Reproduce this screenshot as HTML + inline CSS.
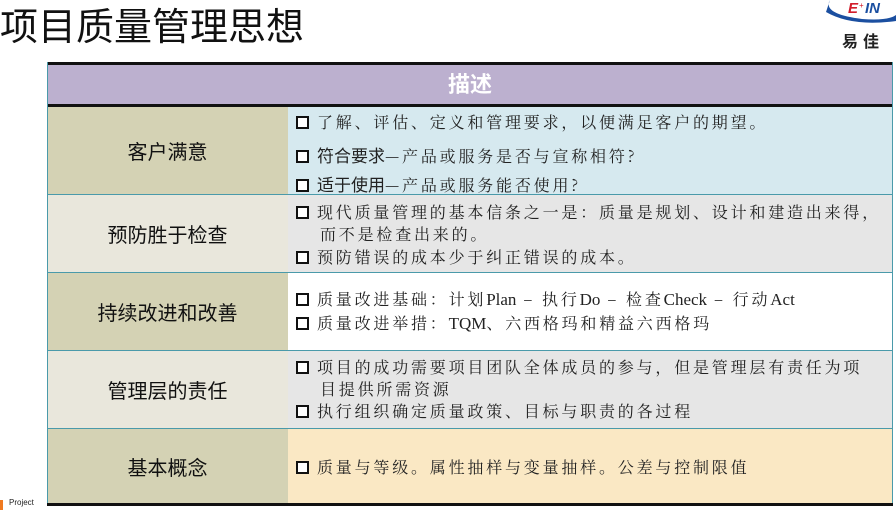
<!DOCTYPE html>
<html><head><meta charset="utf-8"><style>
*{margin:0;padding:0;box-sizing:border-box}
body{width:896px;height:510px;background:#fff;position:relative;overflow:hidden;font-family:"Liberation Sans","Noto Sans CJK SC",sans-serif}
.t{position:absolute;white-space:nowrap}
.title{left:0;top:-4px;font-size:38px;color:#111}
.cell{position:absolute}
.lab{position:absolute;left:47px;width:241px;display:flex;align-items:center;justify-content:center;font-size:20px;color:#111}
.r{position:absolute;left:288px;width:605px}
.ln{position:absolute;left:296px;font-family:"Noto Serif CJK SC","Liberation Serif",serif;font-size:16px;letter-spacing:2.8px;color:#222;white-space:nowrap}
.cb{display:inline-block;width:13px;height:13px;border:2.5px solid #111;vertical-align:-1px;margin-right:8px;background:#fff}
.hl{position:absolute;left:47px;width:846px;height:1px;background:#4a9aaa}
.s{font-family:"Liberation Sans","Noto Sans CJK SC",sans-serif;letter-spacing:0;font-size:17px}
.l{font-family:"Liberation Serif",serif;letter-spacing:0;font-size:17px}
</style></head><body>
<div class="t title">项目质量管理思想</div>
<svg style="position:absolute;left:822px;top:0" width="74" height="24"><path d="M8 0 Q0 14 40 19 Q66 21 74 15 L74 21 Q30 27 4 12 Z" fill="#1b4fa0"/><text x="26" y="13" font-family="Liberation Sans" font-style="italic" font-weight="bold" font-size="15" fill="#d21c2a">E</text><text x="37" y="8" font-size="8" fill="#d21c2a">+</text><text x="43" y="13" font-family="Liberation Sans" font-style="italic" font-weight="bold" font-size="15" fill="#1b4fa0">IN</text></svg>
<div class="t" style="left:842px;top:28px;font-size:16px;font-weight:bold;color:#222;letter-spacing:5px">易佳</div>
<div class="cell" style="left:47px;top:62px;width:846px;height:3px;background:#111"></div>
<div class="cell" style="left:47px;top:65px;width:846px;height:39px;background:#bcb0cf;color:#fff;font-size:22px;font-weight:bold;text-align:center;line-height:39px">描述</div>
<div class="cell" style="left:47px;top:104px;width:846px;height:3px;background:#111"></div>
<div class="lab" style="top:107px;height:87px;background:#d4d2b4">客户满意</div>
<div class="r" style="top:107px;height:87px;background:#d6e9ef"></div>
<div class="lab" style="top:194px;height:78px;background:#e9e7dc">预防胜于检查</div>
<div class="r" style="top:194px;height:78px;background:#e6e6e6"></div>
<div class="lab" style="top:272px;height:78px;background:#d4d2b4">持续改进和改善</div>
<div class="r" style="top:272px;height:78px;background:#fff"></div>
<div class="lab" style="top:350px;height:78px;background:#e9e7dc">管理层的责任</div>
<div class="r" style="top:350px;height:78px;background:#e6e6e6"></div>
<div class="lab" style="top:428px;height:76px;background:#d4d2b4">基本概念</div>
<div class="r" style="top:428px;height:76px;background:#fae8c4"></div>
<div class="hl" style="top:194px"></div><div class="hl" style="top:272px"></div><div class="hl" style="top:350px"></div><div class="hl" style="top:428px"></div>
<div class="cell" style="left:47px;top:62px;width:1px;height:442px;background:#4a9aaa"></div>
<div class="cell" style="left:892px;top:62px;width:1px;height:442px;background:#4a9aaa"></div>
<div class="cell" style="left:47px;top:503px;width:846px;height:3px;background:#111"></div>

<div class="ln" style="top:110px"><span class="cb"></span>了解、评估、定义和管理要求，以便满足客户的期望。</div>
<div class="ln" style="top:142px"><span class="cb"></span><span class="s">符合要求</span>—产品或服务是否与宣称相符?</div>
<div class="ln" style="top:171px"><span class="cb"></span><span class="s">适于使用</span>—产品或服务能否使用?</div>
<div class="ln" style="top:200px"><span class="cb"></span>现代质量管理的基本信条之一是：质量是规划、设计和建造出来得，</div>
<div class="ln" style="top:222px;left:320px">而不是检查出来的。</div>
<div class="ln" style="top:245px"><span class="cb"></span>预防错误的成本少于纠正错误的成本。</div>
<div class="ln" style="top:287px"><span class="cb"></span>质量改进基础：计划<span class="l">Plan</span> – 执行<span class="l">Do</span> – 检查<span class="l">Check</span> – 行动<span class="l">Act</span></div>
<div class="ln" style="top:311px"><span class="cb"></span>质量改进举措：<span class="l">TQM</span>、六西格玛和精益六西格玛</div>
<div class="ln" style="top:355px"><span class="cb"></span>项目的成功需要项目团队全体成员的参与，但是管理层有责任为项</div>
<div class="ln" style="top:377px;left:320px">目提供所需资源</div>
<div class="ln" style="top:399px"><span class="cb"></span>执行组织确定质量政策、目标与职责的各过程</div>
<div class="ln" style="top:455px"><span class="cb"></span>质量与等级。属性抽样与变量抽样。公差与控制限值</div>

<div class="cell" style="left:0;top:500px;width:3px;height:10px;background:#f07a20"></div>
<div class="t" style="left:9px;top:498px;font-size:8px;color:#222">Project</div>
</body></html>
